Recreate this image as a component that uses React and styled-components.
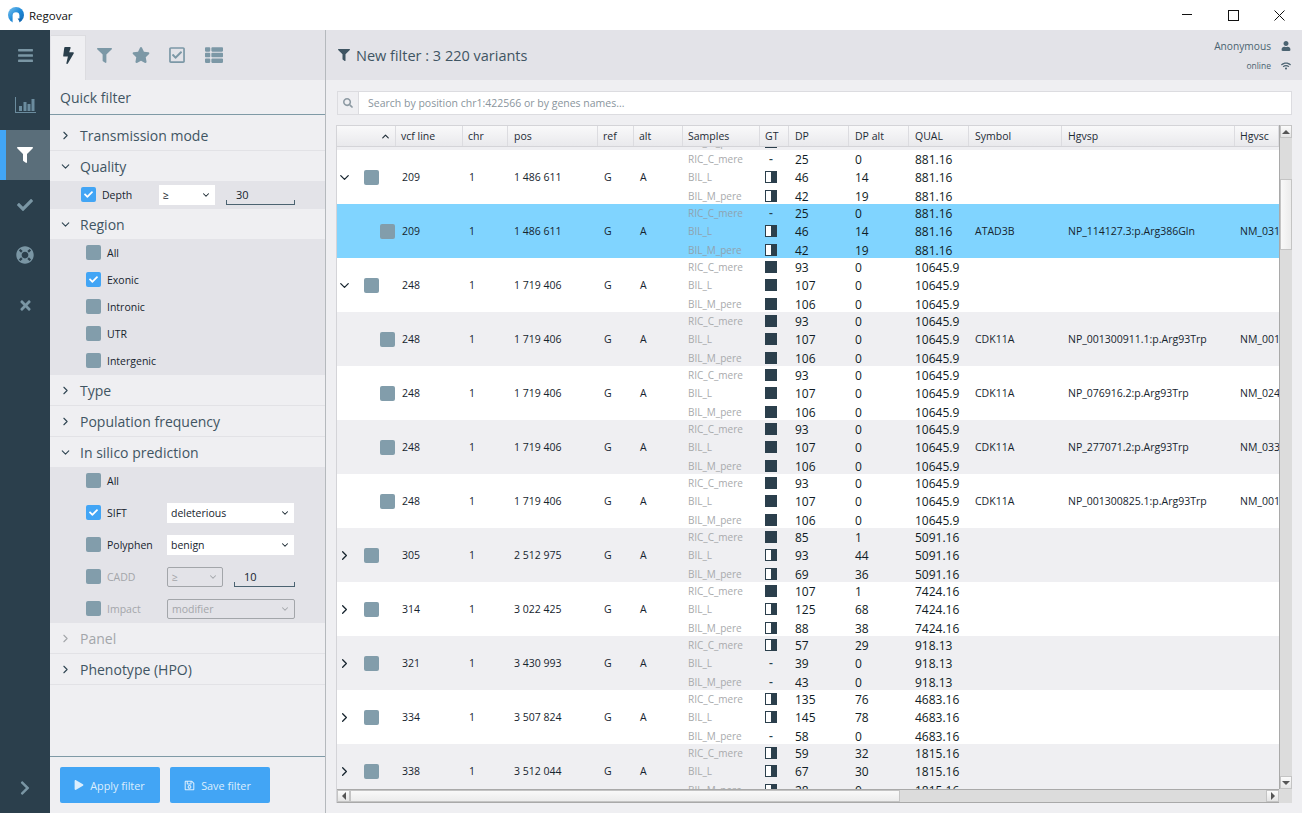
import styled, { createGlobalStyle } from "styled-components";
import { ChevronRight, ChevronDown, ChevronUp } from "lucide-react";
import {
  FaBars, FaBolt, FaCheck, FaFilter, FaLifeRing, FaPlay, FaRegCheckSquare, FaRegSave,
  FaSearch, FaStar, FaThList, FaTimes, FaUser, FaWifi, FaChevronRight,
} from "react-icons/fa";

const GlobalStyle = createGlobalStyle`
  html, body { margin: 0; padding: 0; height: 100%; overflow: hidden; }
  body { font-family: "Open Sans", "Noto Sans", sans-serif; color: #2c3e4c; background: #efeff2; }
  * { box-sizing: border-box; }
`;

const COLUMNS = "59px 67px 45px 90px 36px 49px 77px 29px 60px 60px 60px 93px 173px 44px";

const Window = styled.div`
  width: 1302px;
  height: 813px;
  display: flex;
  flex-direction: column;
`;

const TitleBar = styled.div`
  height: 30px;
  background: #fff;
  display: flex;
  align-items: center;
  padding-left: 8px;
  font-size: 11.5px;
  color: #111;
`;

const AppName = styled.span`
  margin-left: 5px;
  flex: 1;
`;

const WinButton = styled.div`
  width: 46px;
  height: 30px;
  display: flex;
  align-items: center;
  justify-content: center;
`;

const Body = styled.div`
  flex: 1;
  display: flex;
  min-height: 0;
`;

const Sidebar = styled.nav`
  width: 50px;
  background: #2b3f4c;
  display: flex;
  flex-direction: column;
`;

const SideItem = styled.div`
  height: 50px;
  display: flex;
  align-items: center;
  justify-content: center;
  font-size: ${(p) => p.$size || 16}px;
  color: ${(p) => (p.$active ? "#fff" : "#7a96a4")};
  background: ${(p) => (p.$active ? "#5a6e7a" : "transparent")};
  border-left: ${(p) => (p.$active ? "6px solid #42a5f5" : "none")};
  padding-right: ${(p) => (p.$active ? 6 : 0)}px;
  margin-top: ${(p) => (p.$bottom ? "auto" : 0)};
`;

const FilterPanel = styled.aside`
  width: 276px;
  background: #efeff2;
  border-right: 1px solid #b5b9bd;
  display: flex;
  flex-direction: column;
`;

const Tabs = styled.div`
  height: 50px;
  background: #e3e3e8;
  display: flex;
  padding-top: 5px;
  padding-left: 1px;
`;

const Tab = styled.div`
  width: ${(p) => p.$w || 36.5}px;
  display: flex;
  align-items: center;
  justify-content: center;
  font-size: ${(p) => p.$size || 18}px;
  padding-bottom: 5px;
  color: ${(p) => (p.$active ? "#2b3f4c" : "#7c98a6")};
  background: ${(p) => (p.$active ? "#efeff2" : "transparent")};
  border-top: ${(p) => (p.$active ? "1px solid #dcdce0" : "none")};
  border-right: ${(p) => (p.$active ? "1px solid #dcdce0" : "none")};
`;

const PanelTitle = styled.div`
  height: 35px;
  line-height: 36px;
  padding-left: 10px;
  font-size: 14px;
  color: #3f5563;
  border-bottom: 1px solid #7f9aa6;
`;

const SectionHead = styled.div`
  height: ${(p) => p.$h || 31}px;
  display: flex;
  align-items: center;
  padding-top: ${(p) => p.$pt || 0}px;
  padding-left: 9px;
  font-size: 14px;
  color: ${(p) => (p.$disabled ? "#a3a6aa" : "#3f5563")};
  border-bottom: ${(p) => (p.$open ? "none" : "1px solid #e2e2e6")};

  svg { margin-right: 8px; color: ${(p) => (p.$disabled ? "#a3a6aa" : "#2f4552")}; flex: none; }
`;

const SectionBody = styled.div`
  background: #e3e3e8;
  display: flex;
  flex-direction: column;
  gap: ${(p) => p.$gap || 0}px;
  padding-left: ${(p) => p.$pl || 36}px;
`;

const Check = styled.div`
  width: 15px;
  height: 15px;
  flex: none;
  border-radius: 2px;
  background: ${(p) => (p.$on ? "#42a5f5" : "#829dab")};
  color: #fff;
  display: flex;
  align-items: center;
  justify-content: center;
  font-size: 9px;
  margin-left: ${(p) => p.$ml || 0}px;
`;

const OptionLabel = styled.span`
  margin-left: 6px;
  width: ${(p) => (p.$w ? `${p.$w}px` : "auto")};
  flex: none;
`;

const OptionRow = styled.div`
  height: ${(p) => p.$h || 27}px;
  display: flex;
  align-items: center;
  flex: none;
  font-size: 10.5px;
  color: ${(p) => (p.$disabled ? "#a3a6aa" : "#16242e")};

  ${(p) => p.$lift && `
    & > ${Check} { margin-bottom: 2px; }
    & > ${OptionLabel} { margin-bottom: 1px; }
  `}
`;

const SelectBox = styled.div`
  width: ${(p) => p.$w}px;
  height: 20px;
  flex: none;
  display: flex;
  align-items: center;
  justify-content: space-between;
  padding: 0 4px 0 4px;
  font-size: 10.5px;
  color: ${(p) => (p.$disabled ? "#a3a6aa" : "#16242e")};
  background: ${(p) => (p.$disabled ? "transparent" : "#fff")};
  border: ${(p) => (p.$disabled ? "1px solid #a3a6aa" : "none")};
  border-radius: ${(p) => (p.$disabled ? "2px" : 0)};
`;

const NumberField = styled.div`
  width: ${(p) => p.$w}px;
  height: 20px;
  flex: none;
  margin-left: ${(p) => p.$ml}px;
  padding: 0 10px;
  font-size: 11px;
  line-height: 20px;
  color: #16242e;
  border-bottom: 1px solid #4b6371;
  position: relative;

  &::before, &::after {
    content: "";
    position: absolute;
    bottom: 0;
    width: 1px;
    height: 4px;
    background: #4b6371;
  }
  &::before { left: 0; }
  &::after { right: 0; }
`;

const PanelFill = styled.div`
  flex: 1;
`;

const PanelFooter = styled.div`
  height: 57px;
  border-top: 1px solid #7f9aa6;
  display: flex;
  gap: 10px;
  padding: 10px 10px 0;
`;

const ActionButton = styled.div`
  width: 100px;
  height: 36px;
  background: #42a5f5;
  border-radius: 2px;
  color: #dceefd;
  font-size: 10.8px;
  display: flex;
  align-items: center;
  justify-content: center;
  gap: 6px;
  padding-right: ${(p) => p.$pr || 0}px;
`;

const Main = styled.main`
  flex: 1;
  min-width: 0;
  display: flex;
  flex-direction: column;
`;

const MainHeader = styled.header`
  height: 50px;
  background: #e3e3e8;
  display: flex;
  align-items: center;
  justify-content: space-between;
  padding: 0 11px 0 12px;
`;

const HeaderTitle = styled.div`
  font-size: 14.5px;
  color: #3f5563;
  display: flex;
  align-items: center;
  gap: 6px;
`;

const UserBlock = styled.div`
  display: grid;
  grid-template-columns: auto 20px;
  justify-items: end;
  align-items: center;
  row-gap: 7px;
  font-size: 10.2px;
  color: #4b6371;
`;

const OnlineText = styled.span`
  font-size: 8.5px;
`;

const SearchBar = styled.div`
  height: 24px;
  margin: 11px 10px 0 11px;
  display: flex;
  background: #fff;
  border: 1px solid #dcdce0;
`;

const SearchIcon = styled.div`
  width: 21px;
  background: #efeff2;
  border-right: 1px solid #dcdce0;
  color: #8d9aa3;
  font-size: 10px;
  display: flex;
  align-items: center;
  justify-content: center;
`;

const SearchText = styled.div`
  padding-left: 9px;
  font-size: 10.5px;
  line-height: 22px;
  color: #8a959d;
`;

const TableFrame = styled.div`
  margin: 10px 10px 0 10px;
  height: 678px;
  display: grid;
  grid-template-columns: 1fr 13px;
  grid-template-rows: 1fr 14px;
  border-left: 1px solid #d4d4d8;
  min-height: 0;
`;

const TableArea = styled.div`
  display: flex;
  flex-direction: column;
  min-height: 0;
  min-width: 0;
  overflow: hidden;
  background: #fff;
`;

const HeadRow = styled.div`
  height: 22px;
  flex: none;
  display: grid;
  grid-template-columns: ${COLUMNS};
  background: linear-gradient(#f9f9fa, #e9e9ec);
  border-top: 1px solid #d4d4d8;
  border-bottom: 1px solid #d4d4d8;
  font-size: 10.5px;
  color: #1d2b35;
`;

const HeadCell = styled.div`
  padding-left: ${(p) => p.$pl ?? 6}px;
  line-height: 20px;
  border-right: 1px solid #dcdce0;
  white-space: nowrap;
  overflow: hidden;
  display: flex;
  align-items: center;
  justify-content: ${(p) => (p.$end ? "flex-end" : "flex-start")};
  padding-right: ${(p) => (p.$end ? 4 : 0)}px;
`;

const Rows = styled.div`
  flex: 1;
  min-height: 0;
  overflow: hidden;
`;

const Row = styled.div`
  height: 54px;
  display: grid;
  grid-template-columns: ${COLUMNS};
  grid-template-rows: 54px;
  align-items: center;
  background: ${(p) => (p.$selected ? "#80d4ff" : p.$shade ? "#efeff2" : "#fff")};
  margin-top: ${(p) => p.$mt || 0}px;
  font-size: 10.5px;
  color: #16242e;
`;

const TreeCell = styled.div`
  display: flex;
  align-items: center;
  height: 100%;

  svg { flex: none; color: #16242e; }
`;

const TextCell = styled.div`
  padding-left: ${(p) => p.$pl ?? 6}px;
  white-space: nowrap;
  overflow: hidden;
`;

const Stack = styled.div`
  display: flex;
  flex-direction: column;
  padding-left: ${(p) => p.$pl ?? 6}px;
  padding-top: ${(p) => p.$pt || 0}px;
  font-size: ${(p) => p.$size || 12}px;
  color: ${(p) => p.$color || "#101c25"};
`;

const Line = styled.div`
  height: 18px;
  line-height: 18px;
  display: flex;
  align-items: center;
  white-space: nowrap;

  &:last-child { height: 19px; padding-top: 1px; }
`;

const GtBox = styled.div`
  width: 12px;
  height: 12px;
  border: 1px solid #2b3f4c;
  background: ${(p) => (p.$full ? "#2b3f4c" : "linear-gradient(90deg, #fff 50%, #2b3f4c 50%)")};
`;

const GtDash = styled.div`
  width: 12px;
  text-align: center;
  font-weight: 600;
  color: #2b3f4c;
`;

const ScrollTrack = styled.div`
  background: #dcdcdc;
  display: flex;
  flex-direction: ${(p) => (p.$horizontal ? "row" : "column")};
  border-top: ${(p) => (p.$horizontal ? "1px solid #a9a9a9" : "none")};
  border-bottom: ${(p) => (p.$horizontal ? "1px solid #a9a9a9" : "none")};
  border-left: ${(p) => (p.$horizontal ? "none" : "1px solid #a9a9a9")};
  min-height: 0;
`;

const ScrollBtn = styled.div`
  width: ${(p) => (p.$horizontal ? "13px" : "100%")};
  height: ${(p) => (p.$horizontal ? "100%" : "13px")};
  flex: none;
  background: linear-gradient(#fbfbfb, #e4e4e4);
  border: 1px solid #c4c4c4;
  display: flex;
  align-items: center;
  justify-content: center;
  margin-top: ${(p) => (p.$end && !p.$horizontal ? "auto" : 0)};
  margin-left: ${(p) => (p.$end && p.$horizontal ? "auto" : 0)};
`;

const ScrollThumb = styled.div`
  flex: none;
  background: linear-gradient(${(p) => (p.$horizontal ? "180deg" : "90deg")}, #f9f9f9, #ececec);
  border: 1px solid #c4c4c4;
  width: ${(p) => (p.$horizontal ? "550px" : "100%")};
  height: ${(p) => (p.$horizontal ? "100%" : "71px")};
  margin-top: ${(p) => (p.$horizontal ? 0 : "41px")};
`;

const ScrollCorner = styled.div`
  background: #dcdcdc;
`;

const Arrow = styled.span`
  width: 0;
  height: 0;
  border-style: solid;
  border-color: transparent;
  ${(p) => p.$dir === "up" && "border-width: 0 4px 4px; border-bottom-color: #555;"}
  ${(p) => p.$dir === "down" && "border-width: 4px 4px 0; border-top-color: #555;"}
  ${(p) => p.$dir === "left" && "border-width: 4px 4px 4px 0; border-right-color: #555;"}
  ${(p) => p.$dir === "right" && "border-width: 4px 0 4px 4px; border-left-color: #555;"}
`;

const Logo = () => (
  <svg width="16" height="16" viewBox="0 0 16 16">
    <defs>
      <linearGradient id="logoFill" x1="0" y1="0" x2="1" y2="1">
        <stop offset="0" stopColor="#7cc4f0" />
        <stop offset="0.5" stopColor="#1f8ad8" />
        <stop offset="1" stopColor="#1468b0" />
      </linearGradient>
    </defs>
    <circle cx="8" cy="8" r="8" fill="url(#logoFill)" />
    <path d="M4.6 16V8.6a3.4 3.4 0 0 1 6.8 0V16z" fill="#fff" />
    <path d="M9.6 11.5h4.6L11.9 15z" fill="#1468b0" />
  </svg>
);

const BarChartIcon = () => (
  <svg width="21" height="16" viewBox="0 0 21 16" fill="#6b8c9e">
    <rect x="0" y="0" width="1" height="16" />
    <rect x="0" y="15" width="21" height="1" />
    <rect x="4" y="9" width="3" height="5" />
    <rect x="8.5" y="5" width="3" height="9" />
    <rect x="12.5" y="7" width="3" height="7" />
    <rect x="16.5" y="2" width="3" height="12" />
  </svg>
);

const GT_DASH = "-";
const GT_HALF = "h";
const GT_FULL = "f";

const SAMPLES = ["RIC_C_mere", "BIL_L", "BIL_M_pere"];

const v209 = { line: 209, pos: "1 486 611", gt: [GT_DASH, GT_HALF, GT_HALF], dp: [25, 46, 42], alt: [0, 14, 19], qual: "881.16" };
const v248 = { line: 248, pos: "1 719 406", gt: [GT_FULL, GT_FULL, GT_FULL], dp: [93, 107, 106], alt: [0, 0, 0], qual: "10645.9" };

const rows = [
  { line: 200, pos: "1 400 000", gt: [GT_FULL, GT_FULL, GT_FULL], dp: [25, 25, 25], alt: [0, 0, 0], qual: "881.16", clipped: true, shade: true },
  { ...v209, tree: "open" },
  { ...v209, child: true, selected: true, symbol: "ATAD3B", hgvsp: "NP_114127.3:p.Arg386Gln", hgvsc: "NM_031" },
  { ...v248, tree: "open" },
  { ...v248, child: true, shade: true, symbol: "CDK11A", hgvsp: "NP_001300911.1:p.Arg93Trp", hgvsc: "NM_001" },
  { ...v248, child: true, symbol: "CDK11A", hgvsp: "NP_076916.2:p.Arg93Trp", hgvsc: "NM_024" },
  { ...v248, child: true, shade: true, symbol: "CDK11A", hgvsp: "NP_277071.2:p.Arg93Trp", hgvsc: "NM_033" },
  { ...v248, child: true, symbol: "CDK11A", hgvsp: "NP_001300825.1:p.Arg93Trp", hgvsc: "NM_001" },
  { line: 305, pos: "2 512 975", tree: "closed", shade: true, gt: [GT_FULL, GT_HALF, GT_HALF], dp: [85, 93, 69], alt: [1, 44, 36], qual: "5091.16" },
  { line: 314, pos: "3 022 425", tree: "closed", gt: [GT_FULL, GT_HALF, GT_HALF], dp: [107, 125, 88], alt: [1, 68, 38], qual: "7424.16" },
  { line: 321, pos: "3 430 993", tree: "closed", shade: true, gt: [GT_HALF, GT_DASH, GT_DASH], dp: [57, 39, 43], alt: [29, 0, 0], qual: "918.13" },
  { line: 334, pos: "3 507 824", tree: "closed", gt: [GT_HALF, GT_HALF, GT_DASH], dp: [135, 145, 58], alt: [76, 78, 0], qual: "4683.16" },
  { line: 338, pos: "3 512 044", tree: "closed", shade: true, gt: [GT_HALF, GT_HALF, GT_HALF], dp: [59, 67, 28], alt: [32, 30, 0], qual: "1815.16" },
];

const HEADERS = ["vcf line", "chr", "pos", "ref", "alt", "Samples", "GT", "DP", "DP alt", "QUAL", "Symbol", "Hgvsp", "Hgvsc"];
const TIGHT_HEADERS = ["vcf line", "chr", "ref", "alt", "Samples", "GT", "Hgvsc"];

const Gt = ({ kind }) => {
  if (kind === GT_DASH) return <GtDash>-</GtDash>;
  return <GtBox $full={kind === GT_FULL} />;
};

const VariantRow = ({ row }) => (
  <Row $selected={row.selected} $shade={row.shade} $mt={row.clipped ? -51 : 0}>
    <TreeCell>
      {row.tree === "open" && <ChevronDown size={15} strokeWidth={2} />}
      {row.tree === "closed" && <ChevronRight size={15} strokeWidth={2} />}
      {row.tree && <Check $ml={12} />}
      {row.child && <Check $ml={43} />}
    </TreeCell>
    <TextCell>{row.line}</TextCell>
    <TextCell>1</TextCell>
    <TextCell>{row.pos}</TextCell>
    <TextCell>G</TextCell>
    <TextCell>A</TextCell>
    <Stack $size={10} $color={row.selected ? "#8fa3b0" : "#a8aaac"} $pl={5}>
      {SAMPLES.map((s) => <Line key={s}>{s}</Line>)}
    </Stack>
    <Stack $pl={5}>
      {row.gt.map((g, i) => <Line key={i}><Gt kind={g} /></Line>)}
    </Stack>
    <Stack $pt={2}>
      {row.dp.map((d, i) => <Line key={i}>{d}</Line>)}
    </Stack>
    <Stack $pt={2}>
      {row.alt.map((d, i) => <Line key={i}>{d}</Line>)}
    </Stack>
    <Stack $pt={2}>
      {SAMPLES.map((s) => <Line key={s}>{row.qual}</Line>)}
    </Stack>
    <TextCell>{row.symbol}</TextCell>
    <TextCell>{row.hgvsp}</TextCell>
    <TextCell $pl={5}>{row.hgvsc}</TextCell>
  </Row>
);

const Section = ({ label, open, disabled, pt, h }) => (
  <SectionHead $open={open} $disabled={disabled} $pt={pt} $h={h}>
    {open ? <ChevronDown size={13} strokeWidth={2} /> : <ChevronRight size={13} strokeWidth={2} />}
    {label}
  </SectionHead>
);

const Option = ({ label, on, h, lift }) => (
  <OptionRow $h={h} $lift={lift}>
    <Check $on={on}>{on && <FaCheck />}</Check>
    <OptionLabel>{label}</OptionLabel>
  </OptionRow>
);

const Select = ({ value, w, disabled }) => (
  <SelectBox $w={w} $disabled={disabled}>
    {value}
    <ChevronDown size={10} strokeWidth={2.5} />
  </SelectBox>
);

export default function App() {
  return (
    <Window>
      <GlobalStyle />
      <TitleBar>
        <Logo />
        <AppName>Regovar</AppName>
        <WinButton>
          <svg width="11" height="11" viewBox="0 0 11 11"><path d="M0 4.5h10" stroke="#111" /></svg>
        </WinButton>
        <WinButton>
          <svg width="11" height="11" viewBox="0 0 11 11"><rect x=".5" y=".5" width="10" height="10" fill="none" stroke="#111" /></svg>
        </WinButton>
        <WinButton>
          <svg width="11" height="11" viewBox="0 0 11 11"><path d="M.5.5l10 10M10.5.5l-10 10" stroke="#111" /></svg>
        </WinButton>
      </TitleBar>
      <Body>
        <Sidebar>
          <SideItem $size={17}><FaBars /></SideItem>
          <SideItem><BarChartIcon /></SideItem>
          <SideItem $active><FaFilter /></SideItem>
          <SideItem><FaCheck /></SideItem>
          <SideItem $size={18}><FaLifeRing /></SideItem>
          <SideItem $size={15}><FaTimes /></SideItem>
          <SideItem $bottom><FaChevronRight /></SideItem>
        </Sidebar>
        <FilterPanel>
          <Tabs>
            <Tab $active $w={35} $size={17}><FaBolt /></Tab>
            <Tab $size={15}><FaFilter /></Tab>
            <Tab><FaStar /></Tab>
            <Tab><FaRegCheckSquare /></Tab>
            <Tab><FaThList /></Tab>
          </Tabs>
          <PanelTitle>Quick filter</PanelTitle>
          <Section label="Transmission mode" pt={5} h={36} />
          <Section label="Quality" open h={30} />
          <SectionBody $pl={31}>
            <OptionRow $h={28} $lift>
              <Check $on><FaCheck /></Check>
              <OptionLabel $w={57}>Depth</OptionLabel>
              <Select value="≥" w={56} />
              <NumberField $w={69} $ml={11}>30</NumberField>
            </OptionRow>
          </SectionBody>
          <Section label="Region" open h={30} />
          <SectionBody>
            <Option label="All" h={27} />
            <Option label="Exonic" on h={27} />
            <Option label="Intronic" h={27} />
            <Option label="UTR" h={27} />
            <Option label="Intergenic" h={28} lift />
          </SectionBody>
          <Section label="Type" />
          <Section label="Population frequency" />
          <Section label="In silico prediction" open h={30} />
          <SectionBody $gap={4}>
            <Option label="All" h={28} lift />
            <OptionRow $h={28} $lift>
              <Check $on><FaCheck /></Check>
              <OptionLabel $w={60}>SIFT</OptionLabel>
              <Select value="deleterious" w={127} />
            </OptionRow>
            <OptionRow $h={28} $lift>
              <Check />
              <OptionLabel $w={60}>Polyphen</OptionLabel>
              <Select value="benign" w={127} />
            </OptionRow>
            <OptionRow $h={28} $disabled $lift>
              <Check />
              <OptionLabel $w={60}>CADD</OptionLabel>
              <Select value="≥" w={56} disabled />
              <NumberField $w={61} $ml={11}>10</NumberField>
            </OptionRow>
            <OptionRow $h={28} $disabled $lift>
              <Check />
              <OptionLabel $w={60}>Impact</OptionLabel>
              <Select value="modifier" w={128} disabled />
            </OptionRow>
          </SectionBody>
          <Section label="Panel" disabled />
          <Section label="Phenotype (HPO)" />
          <PanelFill />
          <PanelFooter>
            <ActionButton $pr={1}><FaPlay size={10} /> Apply filter</ActionButton>
            <ActionButton $pr={5}><FaRegSave size={11} /> Save filter</ActionButton>
          </PanelFooter>
        </FilterPanel>
        <Main>
          <MainHeader>
            <HeaderTitle><FaFilter size={12} /> New filter : 3 220 variants</HeaderTitle>
            <UserBlock>
              <span>Anonymous</span>
              <FaUser size={10} />
              <OnlineText>online</OnlineText>
              <FaWifi size={10} />
            </UserBlock>
          </MainHeader>
          <SearchBar>
            <SearchIcon><FaSearch /></SearchIcon>
            <SearchText>Search by position chr1:422566 or by genes names...</SearchText>
          </SearchBar>
          <TableFrame>
            <TableArea>
              <HeadRow>
                <HeadCell $end><ChevronUp size={11} strokeWidth={2.5} /></HeadCell>
                {HEADERS.map((h) => (
                  <HeadCell key={h} $pl={TIGHT_HEADERS.includes(h) ? 5 : 6}>{h}</HeadCell>
                ))}
                <HeadCell $pl={0} />
              </HeadRow>
              <Rows>
                {rows.map((row, i) => <VariantRow key={i} row={row} />)}
              </Rows>
            </TableArea>
            <ScrollTrack>
              <ScrollBtn><Arrow $dir="up" /></ScrollBtn>
              <ScrollThumb />
              <ScrollBtn $end><Arrow $dir="down" /></ScrollBtn>
            </ScrollTrack>
            <ScrollTrack $horizontal>
              <ScrollBtn $horizontal><Arrow $dir="left" /></ScrollBtn>
              <ScrollThumb $horizontal />
              <ScrollBtn $horizontal $end><Arrow $dir="right" /></ScrollBtn>
            </ScrollTrack>
            <ScrollCorner />
          </TableFrame>
        </Main>
      </Body>
    </Window>
  );
}
